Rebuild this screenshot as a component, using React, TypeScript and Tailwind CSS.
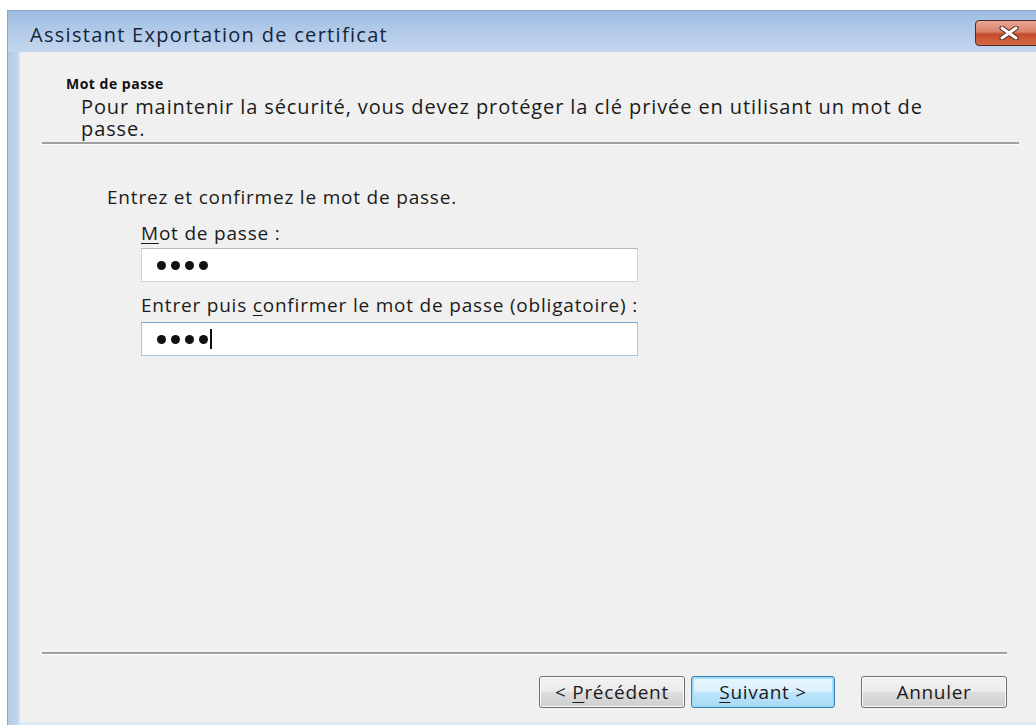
import type { ReactNode } from 'react';

const font = { fontFamily: '"Open Sans", "Noto Sans", "DejaVu Sans", sans-serif' };

function Dots({ caret }: { caret?: boolean }) {
  return (
    <div className="flex items-center gap-[5px] pl-[15px]">
      {[0, 1, 2, 3].map((i) => (
        <span key={i} className="block w-[9px] h-[9px] rounded-full bg-[#111]" />
      ))}
      {caret && <span className="block w-[2px] h-[20px] bg-[#111] -ml-[3px]" />}
    </div>
  );
}

function WinButton({ children, focused }: { children: ReactNode; focused?: boolean }) {
  return (
    <button
      type="button"
      className={
        focused
          ? 'w-[144px] h-[32px] rounded-[3px] border border-[#3c7fb1] shadow-[inset_0_0_0_2px_#9fdcf7] bg-[linear-gradient(#eaf6fd_0%,#d9f0fc_50%,#bee6fd_51%,#a7d9f5_100%)] text-[19px] tracking-[0.7px] text-[#1b1b1b]'
          : 'w-[146px] h-[32px] rounded-[3px] border border-[#707070] shadow-[inset_0_0_0_1px_#fbfbfb] bg-[linear-gradient(#f2f2f2_0%,#ebebeb_50%,#dddddd_51%,#cfcfcf_100%)] text-[19px] tracking-[0.7px] text-[#1b1b1b]'
      }
    >
      {children}
    </button>
  );
}

export default function App() {
  return (
    <div className="w-[1036px] h-[725px] bg-white pt-[10px] pl-[7px] overflow-hidden" style={font}>
      <div className="flex flex-col h-full">
        {/* title bar */}
        <div className="h-[42px] flex items-center justify-between border-l border-t border-[#8aa5c6] bg-[linear-gradient(#9fbde2,#b6cde9_60%,#c3d7ee)]">
          <span className="pl-[22px] pt-[6px] text-[20px] tracking-[1.3px] text-[#14243a]">Assistant Exportation de certificat</span>
          <div className="mr-[-6px] mt-[2px] w-[67px] h-[26px] rounded-[4px] border border-[#4b2a28] bg-[linear-gradient(#e8a898,#d98068_45%,#c44a2c_55%,#d66a46)] flex items-center justify-center">
            <svg width="22" height="14" viewBox="0 0 22 14">
              <path d="M4 2 L18 12 M18 2 L4 12" stroke="#5a2a22" strokeWidth="5" strokeLinecap="round" />
              <path d="M4 2 L18 12 M18 2 L4 12" stroke="#fff" strokeWidth="3" strokeLinecap="round" />
            </svg>
          </div>
        </div>

        <div className="flex flex-1">
          {/* left frame */}
          <div className="w-[13px] bg-[linear-gradient(90deg,#b4cbe4,#bcd3eb_70%,#d6e5f4)] border-l border-[#8aa5c6]" />

          <div className="flex-1 flex flex-col bg-[#f0f0f0] border-b-[3px] border-[#dbe8f5]">
            {/* header */}
            <div className="pt-[23px] pl-[46px]">
              <div className="text-[14px] tracking-[0.5px] font-bold text-[#111] leading-[18px]">Mot de passe</div>
              <p className="pl-[15px] pt-[3px] w-[905px] text-[20px] tracking-[0.9px] leading-[22px] text-[#1b1b1b]">
                Pour maintenir la sécurité, vous devez protéger la clé privée en utilisant un mot de passe.
              </p>
            </div>
            <div className="ml-[22px] mr-[17px] mt-[2px] border-t-2 border-[#a0a0a0] border-b border-b-white" />

            {/* body */}
            <div className="pl-[87px] pt-[41px] text-[19px] tracking-[0.8px] text-[#1b1b1b]">
              <div className="leading-[22px]">Entrez et confirmez le mot de passe.</div>
              <div className="pl-[34px] pt-[14px]">
                <div className="leading-[22px]">
                  <span className="underline underline-offset-[3px] decoration-1">M</span>ot de passe :
                </div>
                <div className="mt-[4px] w-[497px] h-[34px] bg-white border border-[#d4d4d4] border-t-[#b8b8b8] flex items-center">
                  <Dots />
                </div>
                <div className="leading-[22px] mt-[12px]">
                  Entrer puis <span className="underline underline-offset-[3px] decoration-1">c</span>onfirmer le mot de passe (obligatoire) :
                </div>
                <div className="mt-[6px] w-[497px] h-[34px] bg-white border border-[#a9c6e6] border-t-[#7aa3d0] flex items-center">
                  <Dots caret />
                </div>
              </div>
            </div>

            <div className="flex-1" />

            {/* footer */}
            <div className="ml-[22px] mr-[29px] border-t-2 border-[#a0a0a0] border-b border-b-white" />
            <div className="flex justify-end items-center pr-[29px] pt-[21px] pb-[14px]">
              <div className="flex items-center">
                <WinButton>
                  &lt; <span className="underline underline-offset-[3px] decoration-1">P</span>récédent
                </WinButton>
                <div className="w-[6px]" />
                <WinButton focused>
                  <span className="underline underline-offset-[3px] decoration-1">S</span>uivant &gt;
                </WinButton>
                <div className="w-[26px]" />
                <WinButton>Annuler</WinButton>
              </div>
            </div>
          </div>
        </div>
      </div>
    </div>
  );
}
